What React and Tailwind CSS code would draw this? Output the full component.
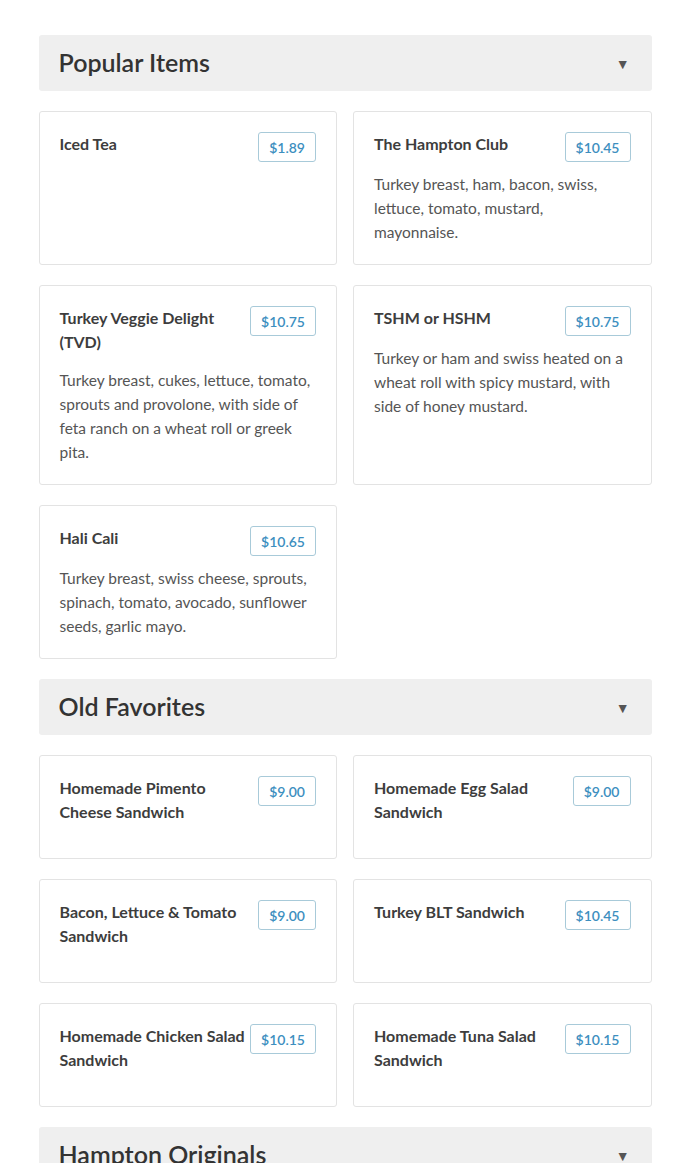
import React from 'react';

const sections = [
    {
        title: 'Popular Items',
        items: [
            { name: 'Iced Tea', price: '$1.89' },
            { name: 'The Hampton Club', price: '$10.45', desc: 'Turkey breast, ham, bacon, swiss, lettuce, tomato, mustard, mayonnaise.' },
            { name: 'Turkey Veggie Delight (TVD)', price: '$10.75', desc: 'Turkey breast, cukes, lettuce, tomato, sprouts and provolone, with side of feta ranch on a wheat roll or greek pita.' },
            { name: 'TSHM or HSHM', price: '$10.75', desc: 'Turkey or ham and swiss heated on a wheat roll with spicy mustard, with side of honey mustard.' },
            { name: 'Hali Cali', price: '$10.65', desc: 'Turkey breast, swiss cheese, sprouts, spinach, tomato, avocado, sunflower seeds, garlic mayo.' },
        ],
    },
    {
        title: 'Old Favorites',
        items: [
            { name: 'Homemade Pimento Cheese Sandwich', price: '$9.00' },
            { name: 'Homemade Egg Salad Sandwich', price: '$9.00' },
            { name: 'Bacon, Lettuce & Tomato Sandwich', price: '$9.00' },
            { name: 'Turkey BLT Sandwich', price: '$10.45' },
            { name: 'Homemade Chicken Salad Sandwich', price: '$10.15' },
            { name: 'Homemade Tuna Salad Sandwich', price: '$10.15' },
        ],
    },
    {
        title: 'Hampton Originals',
        items: [
            { name: 'The Hampton', price: '$10.45', desc: 'Turkey, ham, swiss, lettuce, tomato, mustard and mayo.' },
            { name: 'The Hamptonian', price: '$10.45', desc: 'Roast beef, cheddar, lettuce, tomato and horseradish sauce.' },
        ],
    },
];

const MenuCard = ({ item }) => (
    <div className="border border-[#e3e3e3] rounded-[3px] bg-white p-5">
        <div className="flex items-start justify-between gap-1">
            <h3 className="text-[16px] leading-6 font-bold text-[#3d3d3d]">{item.name}</h3>
            {/* badge is taller than one title line; negative margin keeps the row near line height */}
            <span className="shrink-0 h-[30px] -mb-[4px] px-[10px] flex items-center border border-[#a8cad9] rounded-[3px] text-[14px] font-semibold text-[#3d8fbf]">
                {item.price}
            </span>
        </div>
        <p className="mt-[14px] text-[15.5px] leading-6 text-[#555]">{item.desc}</p>
    </div>
);

const Section = ({ section }) => (
    <section className="mb-5">
        <div className="h-[56px] bg-[#efefef] rounded-[3px] flex items-center justify-between pl-5 pr-[22px]">
            <h2 className="text-[25px] font-semibold text-[#333]">{section.title}</h2>
            <span className="text-[14px] text-[#555]">▼</span>
        </div>
        <div className="grid grid-cols-2 gap-x-4 gap-y-5 mt-5">
            {section.items.map((item) => (
                <MenuCard key={item.name} item={item} />
            ))}
        </div>
    </section>
);

export default function App() {
    return (
        <div className="min-h-screen bg-white pt-[35px]" style={{ fontFamily: 'Lato, "Noto Sans", sans-serif' }}>
            <div className="w-[613px] mx-auto">
                {sections.map((s) => (
                    <Section key={s.title} section={s} />
                ))}
            </div>
        </div>
    );
}
